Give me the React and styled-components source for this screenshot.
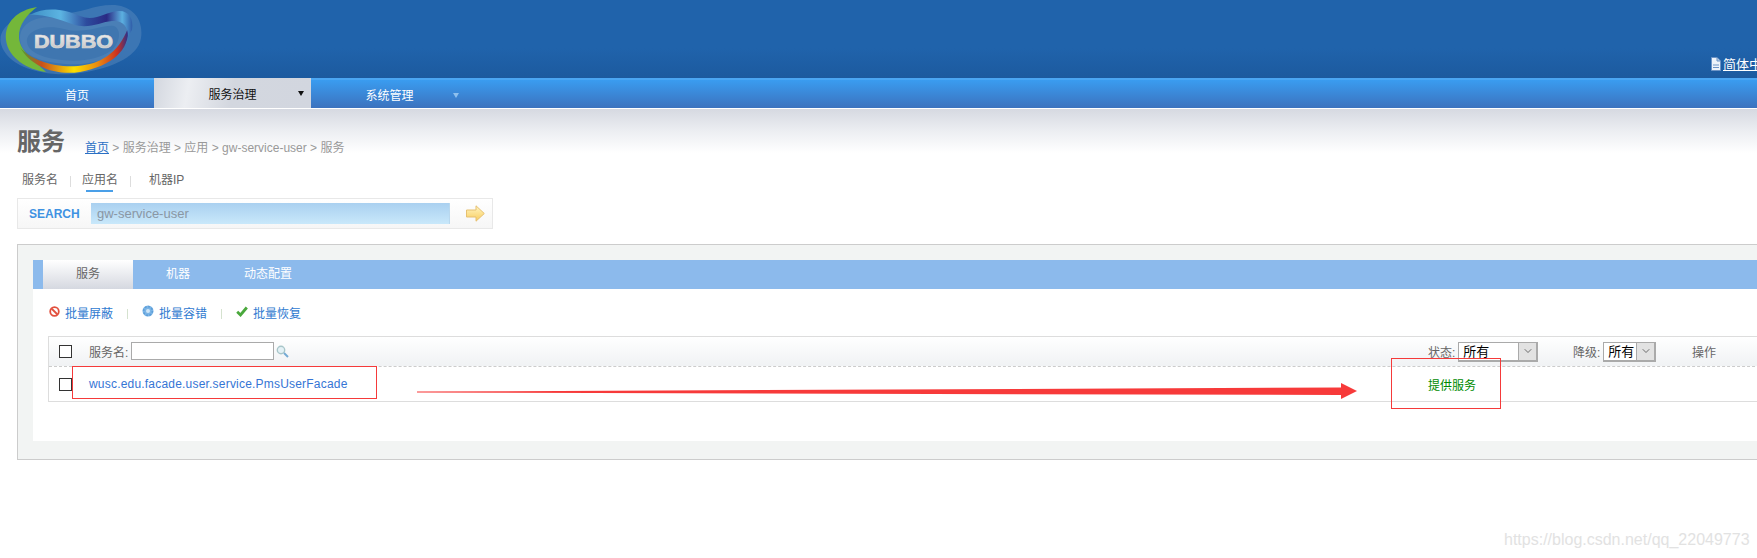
import React from "react";
import styled, { createGlobalStyle } from "styled-components";
import { ChevronDown } from "lucide-react";

const GlobalStyle = createGlobalStyle`
  html, body {
    margin: 0;
    padding: 0;
    background: #fff;
    overflow: hidden;
  }
  body {
    font-family: "Liberation Sans", "Noto Sans CJK SC", sans-serif;
    font-size: 12px;
  }
`;

const Page = styled.div`
  position: relative;
  width: 1757px;
  height: 558px;
  overflow: hidden;
  background: #fff;
`;

const Header = styled.div`
  height: 78px;
  display: flex;
  align-items: flex-end;
  background: linear-gradient(#2063ab 0, #2063ab 62%, #1c5a9f 100%);
`;

const LogoWrap = styled.div`
  width: 143px;
  height: 78px;
  flex: none;
`;

const Lang = styled.a`
  margin-left: auto;
  width: 46px;
  height: 21px;
  display: flex;
  align-items: flex-start;
  gap: 2px;
  flex: none;
  overflow: hidden;
  white-space: nowrap;
  color: #fff;
  font-size: 13px;
  line-height: 16px;
  span {
    text-decoration: underline;
  }
  svg {
    flex: none;
  }
`;

const Nav = styled.div`
  height: 28px;
  display: flex;
  border-top: 2px solid #4ba6f3;
  border-bottom: 1px solid #fff;
  background: linear-gradient(#3a9cf0, #3c72be);
`;

const NavItem = styled.div`
  position: relative;
  width: ${p => p.$width}px;
  margin-top: ${p => (p.$active ? -2 : 0)}px;
  height: ${p => (p.$active ? 30 : 28)}px;
  display: flex;
  align-items: center;
  justify-content: center;
  font-size: 12px;
  box-sizing: border-box;
  color: ${p => (p.$active ? "#111" : "#fff")};
  background: ${p => (p.$active ? "linear-gradient(100deg, #d3d7df 0, #eceef2 22%, #d3d7df 50%, #d2d6df 100%)" : "none")};
`;

const Caret = styled.i`
  position: absolute;
  right: ${p => p.$right}px;
  top: 13px;
  border-style: solid;
  border-width: 5px 3.5px 0;
  border-color: ${p => p.$color} transparent transparent;
`;

const Content = styled.div`
  height: 120px;
  padding: 18px 0 0 17px;
  box-sizing: border-box;
  background: linear-gradient(#d6d9e1, #eceef2 50%, #fff 100%) no-repeat;
  background-size: 100% 44px;
`;

const TitleRow = styled.div`
  display: flex;
  align-items: flex-end;
  height: 30px;
  gap: 20px;
`;

const Title = styled.h1`
  margin: 0;
  font-size: 24px;
  line-height: 30px;
  font-weight: bold;
  color: #666;
`;

const Crumbs = styled.div`
  color: #999;
  font-size: 12px;
  line-height: 16px;
  padding-bottom: 1px;
  a {
    color: #2a70c4;
    text-decoration: underline;
  }
`;

const SearchTabs = styled.div`
  display: flex;
  align-items: center;
  height: 22px;
  margin: 13px 0 0 5px;
  color: #666;
  font-size: 12px;
`;

const SearchTab = styled.a`
  position: relative;
  width: ${p => p.$width}px;
  line-height: 20px;
  margin-bottom: 2px;
  &::after {
    content: "";
    display: ${p => (p.$active ? "block" : "none")};
    position: absolute;
    left: 4px;
    bottom: -2px;
    width: 27px;
    height: 2px;
    background: #4a9fe8;
  }
`;

const Sep = styled.span`
  width: 1px;
  height: 11px;
  background: #ddd;
  margin: ${p => p.$margin};
`;

const SearchBox = styled.div`
  width: 476px;
  height: 31px;
  margin-top: 6px;
  box-sizing: border-box;
  display: flex;
  align-items: center;
  border: 1px solid #e8e8e8;
  background: linear-gradient(#fff, #f6f6f6);
  padding-left: 11px;
`;

const SearchLabel = styled.span`
  width: 62px;
  color: #3f92e2;
  font-size: 12px;
  font-weight: bold;
`;

const SearchInput = styled.div`
  width: 352px;
  height: 21px;
  padding-left: 6px;
  line-height: 22px;
  font-size: 13px;
  color: #8a97a4;
  background: linear-gradient(#a9d0f0, #c9e8fa);
  border-right: 1px solid #b9d8ee;
`;

const SearchGo = styled.div`
  margin-left: 16px;
  display: flex;
`;

const Panel = styled.div`
  width: 1800px;
  height: 216px;
  margin: 15px 0 0 17px;
  padding: 15px;
  box-sizing: border-box;
  border: 1px solid #ccc;
  background: #f2f4f3;
`;

const Inner = styled.div`
  height: 181px;
  background: #fff;
`;

const Tabs = styled.div`
  height: 29px;
  padding-left: 10px;
  display: flex;
  background: #8cbaec;
`;

const Tab = styled.a`
  width: 90px;
  line-height: 29px;
  text-align: center;
  font-size: 12px;
  color: ${p => (p.$active ? "#666" : "#fff")};
  background: ${p => (p.$active ? "linear-gradient(#fff, #d5d8e0)" : "none")};
`;

const Batch = styled.div`
  height: 47px;
  padding-left: 16px;
  display: flex;
  align-items: center;
  color: #2f7ad0;
  font-size: 12px;
`;

const BatchLink = styled.a`
  display: flex;
  align-items: center;
  gap: 5px;
  svg {
    margin-top: -3px;
  }
`;

const BatchSep = styled.span`
  width: 1px;
  height: 10px;
  background: #d5e2cf;
  margin: 2px 14px 0;
`;

const Table = styled.div`
  margin-left: 15px;
  border: 1px solid #ddd;
`;

const Row = styled.div`
  display: grid;
  grid-template-columns: 40px 1339px 145px 119px 100px;
  align-items: center;
  height: ${p => p.$height}px;
  color: #666;
  font-size: 12px;
  background: ${p => (p.$head ? "linear-gradient(#fff, #f0f2f4)" : "#fff")};
  border-bottom: ${p => (p.$head ? "1px dashed #ccc" : "none")};
`;

const Check = styled.input.attrs({ type: "checkbox" })`
  appearance: none;
  width: 13px;
  height: 13px;
  margin: 0 0 0 10px;
  border: 1px solid #333;
  box-sizing: border-box;
  background: #fff;
`;

const NameFilter = styled.div`
  display: flex;
  align-items: center;
`;

const NameInput = styled.input`
  width: 143px;
  height: 18px;
  margin: -2px 2px 0 3px;
  padding: 0;
  box-sizing: border-box;
  border: 1px solid #aaa;
  background: #fff;
`;

const ServiceLink = styled.a`
  color: #3575d5;
  font-size: 12px;
  letter-spacing: 0.2px;
`;

const Filter = styled.div`
  display: flex;
  align-items: center;
  gap: 3px;
`;

const Select = styled.div`
  width: ${p => p.$width}px;
  height: 20px;
  box-sizing: border-box;
  display: flex;
  justify-content: space-between;
  border: 1px solid #aaa;
  border-width: 1px 2px 2px 1px;
  background: #fff;
  color: #000;
  font-size: 13px;
  line-height: 17px;
  padding-left: 4px;
`;

const SelectButton = styled.span`
  width: 17px;
  display: flex;
  align-items: center;
  justify-content: center;
  background: #e2e2e2;
  border-left: 1px solid #aaa;
  color: #444;
`;

const Provided = styled.span`
  color: #008a00;
  font-size: 12px;
`;

const RedBox = styled.div`
  position: absolute;
  left: ${p => p.$x}px;
  top: ${p => p.$y}px;
  width: ${p => p.$w}px;
  height: ${p => p.$h}px;
  box-sizing: border-box;
  border: 1px solid #f53a3a;
  pointer-events: none;
`;

const ArrowMark = styled.svg`
  position: absolute;
  left: 410px;
  top: 380px;
`;

const Watermark = styled.div`
  position: absolute;
  left: 1504px;
  top: 530px;
  color: #e2e2e2;
  font-size: 16px;
  line-height: 20px;
  white-space: nowrap;
`;

const Logo = () => (
  <svg width="143" height="78" viewBox="0 0 143 78">
    <defs>
      <linearGradient id="bottomBand" x1="0" x2="1" y1="0" y2="0">
        <stop offset="0" stopColor="#4c9a3a" />
        <stop offset="0.2" stopColor="#c8501c" />
        <stop offset="0.5" stopColor="#fbe000" />
        <stop offset="0.72" stopColor="#ea8a10" />
        <stop offset="0.9" stopColor="#cc3020" />
        <stop offset="1" stopColor="#27308c" />
      </linearGradient>
      <linearGradient id="topBand" x1="0" x2="1" y1="0" y2="0">
        <stop offset="0" stopColor="#3f8fc4" />
        <stop offset="0.3" stopColor="#5cb4e2" />
        <stop offset="0.55" stopColor="#2d4c9e" />
        <stop offset="0.75" stopColor="#2a2a84" />
        <stop offset="0.9" stopColor="#5cb0e0" />
        <stop offset="1" stopColor="#2f5ca8" />
      </linearGradient>
      <linearGradient id="logoText" x1="0" x2="0" y1="0" y2="1">
        <stop offset="0" stopColor="#f4f4f4" />
        <stop offset="1" stopColor="#bdbdbd" />
      </linearGradient>
    </defs>
    <path d="M1,44 C-4,24 26,9 58,13 C78,15 92,5 112,5 C131,5 144,18 141,38 C138,58 108,70 72,74 C40,76 7,66 1,44 Z" fill="#5f8fbe" opacity="0.45" />
    <path d="M20,38 C20,20 45,13 65,20 C85,27 100,14 115,16 C128,18 131,30 127,42 C118,58 90,66 65,64 C40,62 20,55 20,38 Z" fill="#4a7fb6" />
    <path d="M27,42 C26,30 46,24 64,29 C84,35 104,24 114,26 C122,30 120,42 112,50 C98,60 80,62 62,60 C42,58 28,52 27,42 Z" fill="#3f76b0" />
    <path d="M37,7 C18,10 4,22 6,40 C8,58 28,70 46,72 C36,62 20,52 19,38 C18,24 28,14 37,7 Z" fill="#74b73a" />
    <path d="M20,47 C30,60 55,68 78,66 C100,64 118,54 128,28 C130,50 112,66 80,72 C55,76 30,66 20,47 Z" fill="url(#bottomBand)" />
    <path d="M30,15 C45,6 65,9 80,16 C95,22 105,12 118,11 C128,10 134,18 132,30 L128,36 C128,26 122,20 112,21 C100,22 88,30 72,24 C58,19 42,14 30,15 Z" fill="url(#topBand)" />
    <text x="34" y="48" fontFamily="'Liberation Sans', sans-serif" fontWeight="bold" fontSize="18" textLength="79" lengthAdjust="spacingAndGlyphs" fill="url(#logoText)" stroke="#d8d8d8" strokeWidth="0.7">DUBBO</text>
  </svg>
);

const DocIcon = () => (
  <svg width="10" height="14" viewBox="0 0 10 14">
    <path d="M0.5,0.5 H6 L9.5,4 V13.5 H0.5 Z" fill="#eef3fa" stroke="#6d94c6" />
    <path d="M2,8 H8 M2,10.5 H8" stroke="#6d94c6" />
    <path d="M6,1 V4 H9" fill="#b9cde6" stroke="#6d94c6" />
  </svg>
);

const BanIcon = () => (
  <svg width="11" height="11" viewBox="0 0 11 11">
    <circle cx="5.5" cy="5.5" r="4.3" fill="#fff" stroke="#e2503e" strokeWidth="1.8" />
    <path d="M2.5,2.5 L8.5,8.5" stroke="#e2503e" strokeWidth="1.8" />
  </svg>
);

const GearIcon = () => (
  <svg width="12" height="12" viewBox="0 0 12 12">
    <circle cx="6" cy="6" r="5.5" fill="#7ab4e6" />
    <circle cx="6" cy="6" r="4.4" fill="none" stroke="#5d9ed8" strokeWidth="1.6" strokeDasharray="1.8 1.6" />
    <circle cx="6" cy="6" r="2" fill="#cfe5f7" />
  </svg>
);

const CheckIcon = () => (
  <svg width="12" height="11" viewBox="0 0 12 11">
    <path d="M1.2,5.8 L4.5,9 L10.8,1.5" fill="none" stroke="#4aa83c" strokeWidth="2.8" />
  </svg>
);

const LensIcon = () => (
  <svg width="13" height="13" viewBox="0 0 13 13">
    <circle cx="5" cy="5" r="3.7" fill="#e4f1f6" stroke="#a8c6c9" strokeWidth="1.4" />
    <path d="M8,8 L12,12" stroke="#74aad4" strokeWidth="2" />
  </svg>
);

const GoArrow = () => (
  <svg width="19" height="17" viewBox="0 0 19 17">
    <defs>
      <linearGradient id="goFill" x1="0" x2="0" y1="0" y2="1">
        <stop offset="0" stopColor="#fff6c4" />
        <stop offset="1" stopColor="#f9cc5c" />
      </linearGradient>
    </defs>
    <path d="M0.5,5 H10 V0.8 L18.3,8.5 L10,16.2 V12 H0.5 Z" fill="url(#goFill)" stroke="#e6c070" />
  </svg>
);

const FilterSelect = ({ width, value }) => (
  <Select $width={width}>
    {value}
    <SelectButton>
      <ChevronDown size={12} strokeWidth={1.5} />
    </SelectButton>
  </Select>
);

const App = () => (
  <Page>
    <GlobalStyle />
    <Header>
      <LogoWrap>
        <Logo />
      </LogoWrap>
      <Lang>
        <DocIcon />
        <span>简体中文</span>
      </Lang>
    </Header>
    <Nav>
      <NavItem $width={154}>首页</NavItem>
      <NavItem $width={157} $active>
        服务治理
        <Caret $right={7} $color="#111" />
      </NavItem>
      <NavItem $width={157}>
        系统管理
        <Caret $right={9} $color="#8fc0ee" />
      </NavItem>
    </Nav>
    <Content>
      <TitleRow>
        <Title>服务</Title>
        <Crumbs>
          <a>首页</a> &gt; 服务治理 &gt; 应用 &gt; gw-service-user &gt; 服务
        </Crumbs>
      </TitleRow>
      <SearchTabs>
        <SearchTab $width={48}>服务名</SearchTab>
        <Sep $margin="0 11px 0 0" />
        <SearchTab $width={48} $active>应用名</SearchTab>
        <Sep $margin="0 18px 0 0" />
        <SearchTab $width={48}>机器IP</SearchTab>
      </SearchTabs>
      <SearchBox>
        <SearchLabel>SEARCH</SearchLabel>
        <SearchInput>gw-service-user</SearchInput>
        <SearchGo>
          <GoArrow />
        </SearchGo>
      </SearchBox>
    </Content>
    <Panel>
      <Inner>
        <Tabs>
          <Tab $active>服务</Tab>
          <Tab>机器</Tab>
          <Tab>动态配置</Tab>
        </Tabs>
        <Batch>
          <BatchLink><BanIcon />批量屏蔽</BatchLink>
          <BatchSep />
          <BatchLink><GearIcon />批量容错</BatchLink>
          <BatchSep />
          <BatchLink><CheckIcon />批量恢复</BatchLink>
        </Batch>
        <Table>
          <Row $head $height={29}>
            <Check />
            <NameFilter>
              服务名:
              <NameInput />
              <LensIcon />
            </NameFilter>
            <Filter>
              状态:
              <FilterSelect width={80} value="所有" />
            </Filter>
            <Filter>
              降级:
              <FilterSelect width={53} value="所有" />
            </Filter>
            <span>操作</span>
          </Row>
          <Row $height={34}>
            <Check />
            <ServiceLink>wusc.edu.facade.user.service.PmsUserFacade</ServiceLink>
            <Provided>提供服务</Provided>
          </Row>
        </Table>
      </Inner>
    </Panel>
    <RedBox $x={72} $y={366} $w={305} $h={33} />
    <RedBox $x={1391} $y={358} $w={110} $h={51} />
    <ArrowMark width="950" height="24" viewBox="0 0 950 24">
      <polygon points="7,11.6 931,7.5 931,3 947,11 931,19 931,15 7,12.6" fill="#f73a3a" />
    </ArrowMark>
    <Watermark>https://blog.csdn.net/qq_22049773</Watermark>
  </Page>
);

export default App;
